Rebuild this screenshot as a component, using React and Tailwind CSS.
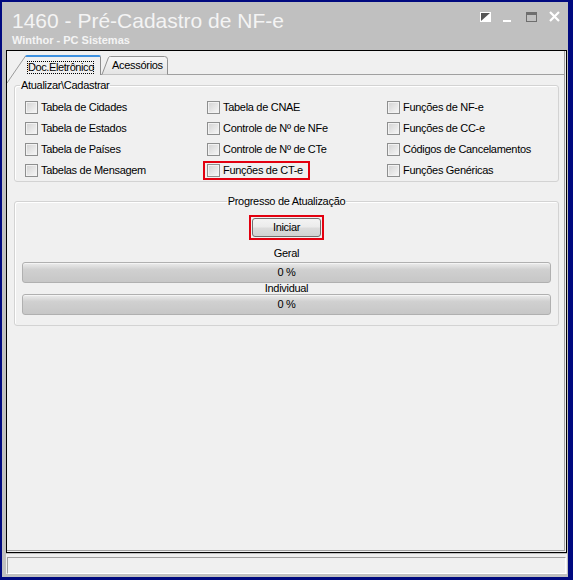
import React from 'react';

const ROWS = [
  ['Tabela de Cidades', 'Tabela de CNAE', 'Funções de NF-e'],
  ['Tabela de Estados', 'Controle de Nº de NFe', 'Funções de CC-e'],
  ['Tabela de Países', 'Controle de Nº de CTe', 'Códigos de Cancelamentos'],
  ['Tabelas de Mensagem', 'Funções de CT-e', 'Funções Genéricas'],
];

function Check() {
  return (
    <span className="w-[13px] h-[13px] shrink-0 border border-[#8e8f8f] bg-linear-to-br from-[#d2d2d2] to-[#f8f8f8] shadow-[inset_0_0_0_1px_#f2f2f2]" />
  );
}

function WindowButtons() {
  return (
    <svg width="81" height="12" viewBox="0 0 81 12" className="mt-[9px]">
      <rect x="0" y="1" width="11" height="10" fill="#ffffff" />
      <polygon points="1,2 10,2 1,10" fill="#555555" />
      <rect x="23" y="9" width="8" height="2" fill="#ffffff" />
      <rect x="46.5" y="1.5" width="10" height="9" fill="none" stroke="#6e6e6e" />
      <rect x="46" y="1" width="11" height="3" fill="#6e6e6e" />
      <path d="M70 1 L79 10 M79 1 L70 10" stroke="#ffffff" strokeWidth="2.2" />
    </svg>
  );
}

function ProgressBar() {
  return (
    <div className="h-[21px] flex items-center justify-center rounded-[3px] border border-[#b0b0b0] bg-[linear-gradient(#ececec,#d0d0d0_35%,#c7c7c7)] shadow-[inset_0_1px_0_#f4f4f4]">
      0 %
    </div>
  );
}

export default function App() {
  return (
    <div className="w-[573px] h-[580px] bg-[#00097f] pl-[2px] pr-[5px] pt-[2px] pb-[3px] font-['Liberation_Sans',Arial,sans-serif] text-[11px] tracking-[-0.3px] text-black">
      <div className="h-full bg-[#c0c0c0] flex flex-col">
        {/* title */}
        <div className="h-[48px] flex justify-between pl-[10px] pr-[7px]">
          <div className="pt-[8px] text-[#f4f4f4] tracking-normal">
            <div className="text-[21px] leading-[21px]">1460 - Pré-Cadastro de NF-e</div>
            <div className="mt-[3px] text-[11px] leading-[13px] font-bold">Winthor - PC Sistemas</div>
          </div>
          <WindowButtons />
        </div>

        {/* main panel */}
        <div className="ml-[4px] w-[561px] h-[503px] border border-black bg-[#f0f0f0]">
          <div className="relative h-[500px] mr-px border-r border-b border-[#a0a0a0] flex flex-col">
            {/* tab strip */}
            <div className="h-[24px] flex items-end">
              <div className="w-[18px]" />
              <div className="w-[76px] h-[20px] border-t-2 border-t-[#3d91e0] rounded-t-[2px] border-r border-r-[#8c8c8c] bg-[#f0f0f0] pl-[2px] pt-[2px]">
                <span className="inline-block outline outline-1 outline-dotted outline-black -outline-offset-1 pl-px leading-[12px] h-[13px] tracking-[-0.4px]">
                  Doc.Eletrônico
                </span>
              </div>
              <div className="relative w-[67px] h-[19px] border-b border-[#a0a0a0] pl-[11px] pt-[3px] leading-[13px]">
                <svg className="absolute left-0 top-0" width="67" height="19" viewBox="0 0 67 19">
                  <defs>
                    <linearGradient id="acc" x1="0" y1="0" x2="0" y2="1">
                      <stop offset="0" stopColor="#f7f7f7" />
                      <stop offset="1" stopColor="#e4e4e4" />
                    </linearGradient>
                  </defs>
                  <path d="M1 18.5 L7.5 1.5 Q8 0.5 9.5 0.5 L63.5 0.5 Q66.5 0.5 66.5 3.5 L66.5 18.5" fill="url(#acc)" stroke="#919191" />
                </svg>
                <span className="relative">Acessórios</span>
              </div>
              <div className="flex-1 h-px bg-[#a0a0a0]" />
            </div>
            <svg className="absolute left-0 top-0" width="20" height="34" viewBox="0 0 20 34">
              <path d="M18.5 5 L0 32" stroke="#9a9a9a" fill="none" />
            </svg>

            {/* Atualizar\Cadastrar */}
            <fieldset className="ml-[7px] w-[545px] mt-[4px] border border-[#d3d3d3] rounded-[3px] pl-[5px] shadow-[inset_1px_1px_0_#ffffff]">
              <legend className="px-px leading-[13px]">Atualizar\Cadastrar</legend>
              <div className="ml-[5px] pt-[5px] grid grid-cols-[182px_180px_1fr]">
                {ROWS.map((row, r) =>
                  row.map((label, c) => (
                    <div key={label} className="relative h-[21px] flex items-center gap-[3px]">
                      <Check />
                      <span>{label}</span>
                      {r === 3 && c === 1 && (
                        <span className="absolute left-[-4px] top-[1px] w-[107px] h-[19px] border-2 border-[#e3000f]" />
                      )}
                    </div>
                  ))
                )}
              </div>
            </fieldset>

            {/* Progresso de Atualização */}
            <fieldset className="ml-[7px] w-[545px] mt-[13px] border border-[#d3d3d3] rounded-[3px] px-[7px] pb-[10px] shadow-[inset_1px_1px_0_#ffffff]">
              <legend className="mx-auto px-px leading-[13px]">Progresso de Atualização</legend>
              <div className="pt-[7px] flex flex-col">
                <div className="mx-auto w-[75px] h-[25px] border-2 border-[#e3000f] p-px">
                  <div className="h-full rounded-[3px] border border-[#707070] bg-[linear-gradient(#f3f3f3,#ebebeb_48%,#dcdcdc_52%,#d2d2d2)] flex items-center justify-center">
                    Iniciar
                  </div>
                </div>
                <div className="mt-[7px] text-center leading-[13px]">Geral</div>
                <div className="mt-[2px]">
                  <ProgressBar />
                </div>
                <div className="text-center leading-[11px]">Individual</div>
                <ProgressBar />
              </div>
            </fieldset>
          </div>
        </div>

        {/* status bar */}
        <div className="mt-px ml-[4px] w-[561px] h-[20px] bg-[#f0f0f0] pt-[3px] px-px">
          <div className="h-full border-t border-l border-[#a0a0a0] border-b border-r border-b-white border-r-white" />
        </div>
      </div>
    </div>
  );
}
